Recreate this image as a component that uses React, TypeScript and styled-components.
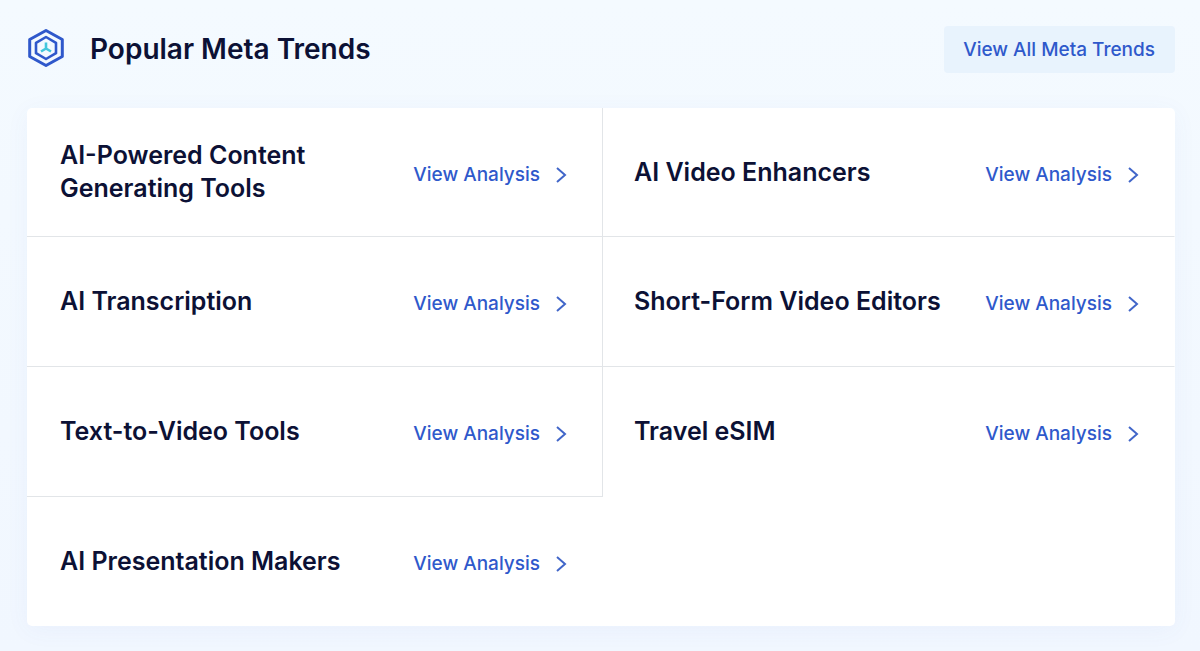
import React from "react";
import styled, { createGlobalStyle } from "styled-components";

const GlobalStyle = createGlobalStyle`
  * { box-sizing: border-box; }
  body {
    margin: 0;
    background: linear-gradient(#f4faff, #f1f7ff);
    color: #0c1135;
    font-family: Inter, "Liberation Sans", sans-serif;
    font-weight: 500;
  }
`;

const Section = styled.section`
  padding: 26px 25px 25px 27px;
`;

const Header = styled.header`
  display: flex;
  align-items: center;
  justify-content: space-between;
  margin-bottom: 35px;
`;

const Heading = styled.div`
  display: flex;
  align-items: center;
  gap: 25px;
  padding-bottom: 4px;
`;

const Title = styled.h2`
  margin: 0;
  padding-top: 2px;
  font-size: 28px;
  line-height: 36px;
  font-weight: 600;
`;

const Logo = styled.svg`
  display: block;
  width: 38px;
  height: 40px;
`;

const AllButton = styled.button`
  height: 47px;
  padding: 0 20px 0 19px;
  border: 0;
  border-radius: 4px;
  background: #e8f3fd;
  color: #2f59cb;
  font: inherit;
  font-size: 19px;
  line-height: 24px;
  cursor: pointer;
`;

const Grid = styled.ul`
  display: grid;
  grid-template-columns: minmax(0, 576fr) minmax(0, 572fr);
  grid-template-rows: minmax(129px, auto) repeat(2, minmax(130px, auto)) minmax(129px, auto);
  margin: 0;
  padding: 0;
  list-style: none;
  background: #fff;
  border-radius: 5px;
  box-shadow: 0 4px 24px rgba(70, 100, 190, 0.05);
`;

const Cell = styled.li<{ $right: boolean; $bottom: boolean }>`
  display: flex;
  align-items: center;
  justify-content: space-between;
  padding: 0 35px 0 33px;
  border-right: 1px solid ${(p) => (p.$right ? "#e2e5e8" : "transparent")};
  border-bottom: 1px solid ${(p) => (p.$bottom ? "#e2e5e8" : "transparent")};

  &:nth-child(even) {
    padding-left: 31px;
  }
`;

const Name = styled.h3`
  margin: 0;
  max-width: 320px;
  font-size: 25px;
  line-height: 33px;
  font-weight: 600;
`;

const Link = styled.a`
  display: flex;
  align-items: center;
  gap: 15px;
  flex: none;
  padding-top: 5px;
  color: #2f59cb;
  font-size: 19px;
  line-height: 24px;
  text-decoration: none;
`;

const Chevron = styled.svg`
  display: block;
  width: 12px;
  height: 18px;
`;

const trends = [
  "AI-Powered Content Generating Tools",
  "AI Video Enhancers",
  "AI Transcription",
  "Short-Form Video Editors",
  "Text-to-Video Tools",
  "Travel eSIM",
  "AI Presentation Makers",
];

export default function App() {
  return (
    <>
      <GlobalStyle />
      <Section>
        <Header>
          <Heading>
            <Logo viewBox="0 0 38 40" fill="none" aria-hidden="true">
              <path d="M19 2.5 35.3 11.5v17L19 37.5 2.7 28.5v-17Z" stroke="#2f58cb" strokeWidth="3" strokeLinejoin="round" />
              <path d="M19 9 29 14.8v10.4L19 31 9 25.200V14.8Z" stroke="#2f58cb" strokeWidth="2.600" strokeLinejoin="round" />
              <path d="M19 14.500V20.500M19 20.500 14 23.500M19 20.500 24 23.500" stroke="#43c7dc" strokeWidth="2.600" />
            </Logo>
            <Title>Popular Meta Trends</Title>
          </Heading>
          <AllButton type="button">View All Meta Trends</AllButton>
        </Header>
        <Grid>
          {trends.map((name, i) => (
            <Cell key={name} $right={i % 2 === 0 && i < trends.length - 1} $bottom={i < trends.length - 2}>
              <Name>{name}</Name>
              <Link href="#">
                View Analysis
                <Chevron viewBox="0 0 12 18" fill="none" aria-hidden="true">
                  <path d="m2 2 8 7-8 7" stroke="#4166c9" strokeWidth="2" />
                </Chevron>
              </Link>
            </Cell>
          ))}
        </Grid>
      </Section>
    </>
  );
}
